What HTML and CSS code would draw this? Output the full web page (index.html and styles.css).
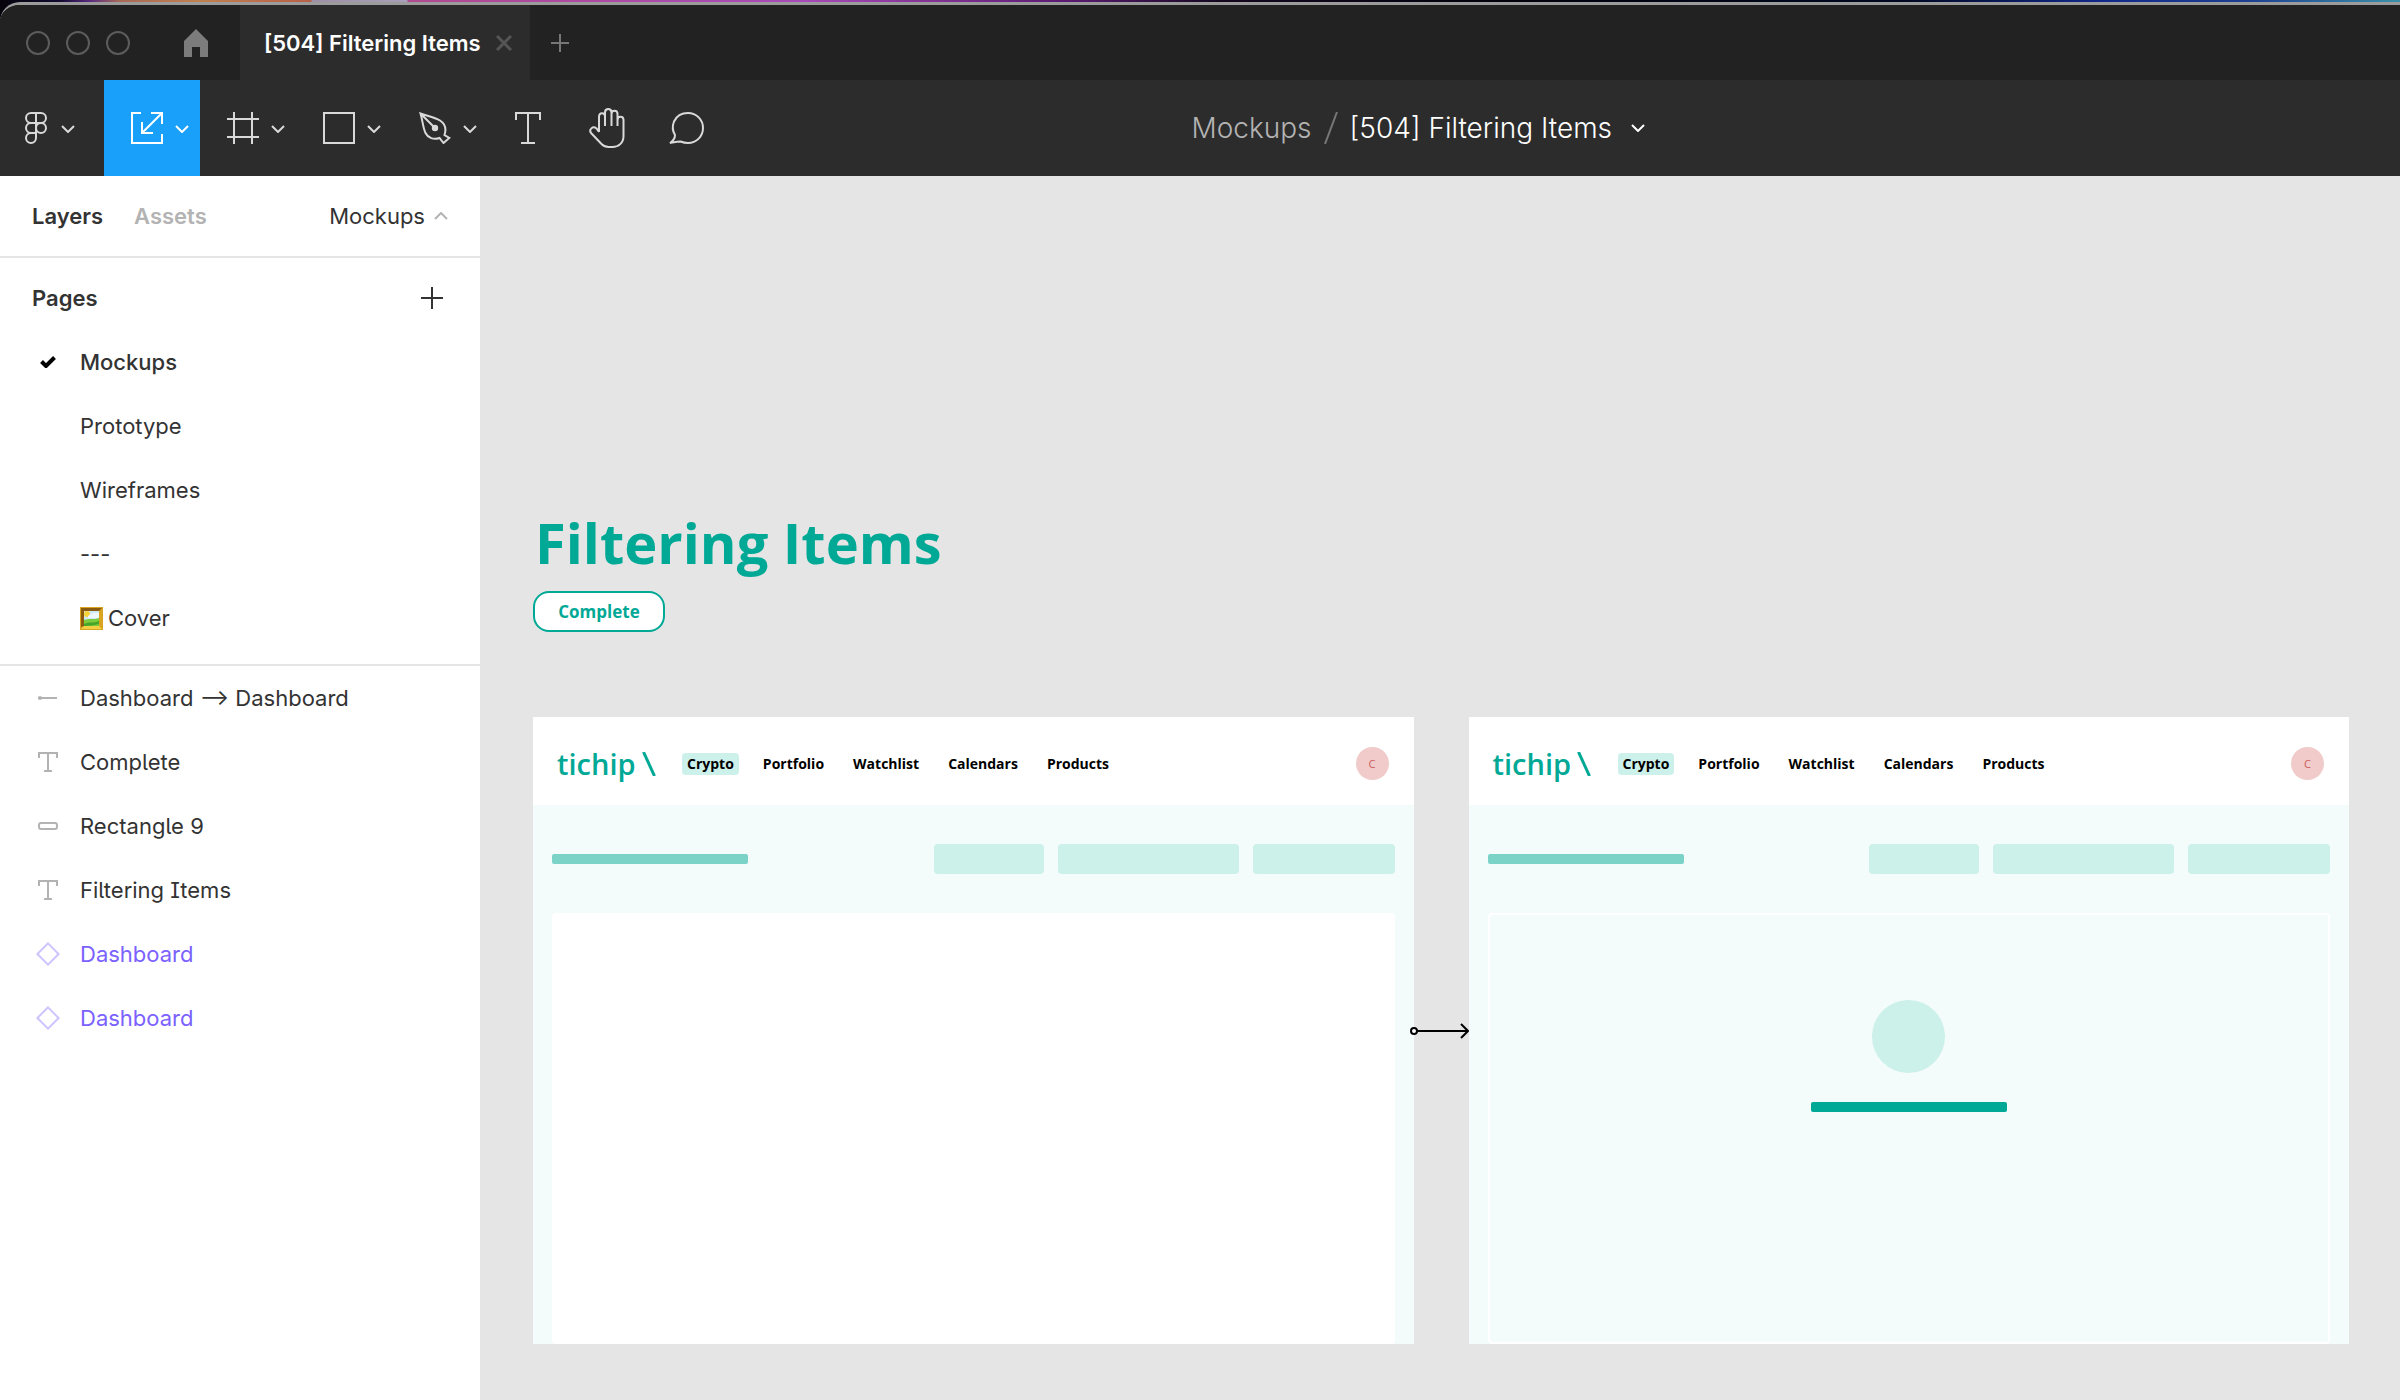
FILE: index.html
```html
<!DOCTYPE html>
<html lang="en">
<head>
<meta charset="utf-8">
<meta name="viewport" content="width=device-width, initial-scale=1">
<title>[504] Filtering Items</title>
<link rel="stylesheet" href="styles.css">
</head>
<body>
<svg class="sprite" aria-hidden="true">
  <symbol id="chevron" viewBox="0 0 14 8"><path d="M1 1l6 6 6-6" fill="none" stroke="currentColor" stroke-width="2"/></symbol>
  <symbol id="text-layer" viewBox="0 0 20 20"><path d="M1 6V1h18v5M10 1v18M6 19h8" fill="none" stroke="currentColor" stroke-width="2"/></symbol>
  <symbol id="diamond" viewBox="0 0 24 24"><path d="M12 1.400L22.600 12 12 22.600 1.400 12z" fill="none" stroke="currentColor" stroke-width="2"/></symbol>
</svg>

<div class="desktop">
<div class="window">
  <header class="tabbar">
    <div class="home-area">
      <div class="lights"><button class="light" aria-label="Close window"></button><button class="light" aria-label="Minimize window"></button><button class="light" aria-label="Zoom window"></button></div>
      <button class="home" aria-label="Home"><svg width="24" height="28" viewBox="0 0 24 28"><path d="M12 0l12 12v16h-8V18H8v10H0V12z" fill="currentColor"/></svg></button>
    </div>
    <div class="tab">
      <span class="tab-title">[504] Filtering Items</span>
      <button class="tab-close" aria-label="Close tab"><svg width="16" height="16" viewBox="0 0 16 16"><path d="M1 1l14 14M15 1L1 15" stroke="currentColor" stroke-width="3"/></svg></button>
    </div>
    <button class="tab-new" aria-label="New tab"><svg width="18" height="18" viewBox="0 0 18 18"><path d="M9 0v18M0 9h18" stroke="currentColor" stroke-width="2"/></svg></button>
  </header>

  <div class="toolbar">
    <div class="tools">
      <button class="tool tool-menu" aria-label="Main menu">
        <svg width="22" height="32" viewBox="0 0 22 32" fill="none" stroke="currentColor" stroke-width="2"><path d="M11 1H6a5 5 0 0 0 0 10h5zM11 1h5a5 5 0 0 1 0 10h-5M11 11H6a5 5 0 0 0 0 10h5zM11 21H6a5 5 0 1 0 5 5z"/><circle cx="16" cy="16" r="5"/></svg>
        <svg class="chev" width="14" height="8"><use href="#chevron"/></svg>
      </button>
      <button class="tool active" aria-label="Move and scale">
        <svg width="32" height="32" viewBox="0 0 32 32" fill="none" stroke="currentColor" stroke-width="2"><path d="M10 1H1v30h30v-9M20 1h11v11M31 1L11 21M11 10v11h11"/></svg>
        <svg class="chev" width="14" height="8"><use href="#chevron"/></svg>
      </button>
      <button class="tool" aria-label="Frame">
        <svg width="32" height="32" viewBox="0 0 32 32" fill="none" stroke="currentColor" stroke-width="2"><path d="M7 0v32M25 0v32M0 7h32M0 25h32"/></svg>
        <svg class="chev" width="14" height="8"><use href="#chevron"/></svg>
      </button>
      <button class="tool" aria-label="Shapes">
        <svg width="32" height="32" viewBox="0 0 32 32" fill="none" stroke="currentColor" stroke-width="2"><path d="M1 1h30v30H1z"/></svg>
        <svg class="chev" width="14" height="8"><use href="#chevron"/></svg>
      </button>
      <button class="tool" aria-label="Pen">
        <svg width="32" height="32" viewBox="0 0 32 32" fill="none" stroke="currentColor" stroke-width="2"><path d="M1.500 1.500c7 2.500 14 3.500 19.500 7 5.500 3.500 6.500 8.500 4.500 14.500l4.800 3-5.800 5-4-5c-6 2-11.500 0-14-5-2.500-5-3-13-5-19.500zM2 2l13 13"/><circle cx="16" cy="16" r="2.200" fill="currentColor"/></svg>
        <svg class="chev" width="14" height="8"><use href="#chevron"/></svg>
      </button>
      <button class="tool single" aria-label="Text"><svg width="26" height="32" viewBox="0 0 26 32" fill="none" stroke="currentColor" stroke-width="2"><path d="M1 8V1h24v7M13 1v30M6 31h14"/></svg></button>
      <button class="tool single" aria-label="Hand"><svg width="36" height="40" viewBox="0 0 36 40" fill="none" stroke="currentColor" stroke-width="2"><path d="M10 24V9c0-5 6-5 6 0v9V4.500c0-4.700 6.500-4.700 6.500 0V18M16 18V5M22.500 18V6c0-4.500 6-4.500 6 0v12V12c0-4.500 6-4.500 6 0v16c0 7-5 11-11 11h-4c-3 0-5-1-7-3L2.500 25.500c-3.500-4 1.500-8 5-5L10 24"/></svg></button>
      <button class="tool single" aria-label="Comment"><svg width="36" height="32" viewBox="0 0 36 32" fill="none" stroke="currentColor" stroke-width="2"><path d="M2 31c3-2 5-5 5-8C4.500 19 4.200 14 6 9.500 8.500 4 14 1 20 1c8.500 0 15 6.700 15 15s-6.500 15-15 15c-3 0-5-.5-7.500-1.500C9 29.500 5 30.500 2 31z"/></svg></button>
    </div>
    <div class="crumbs">
      <a class="crumb-parent" href="#mockups">Mockups</a>
      <svg class="slash" width="14" height="32" viewBox="0 0 14 32"><path d="M13 0L1 32" stroke="currentColor" stroke-width="2"/></svg>
      <button class="crumb-file">[504] Filtering Items <svg class="chev" width="14" height="8"><use href="#chevron"/></svg></button>
    </div>
  </div>

  <div class="workspace">
    <aside class="sidebar">
      <div class="side-tabs">
        <button class="side-tab on">Layers</button>
        <button class="side-tab">Assets</button>
        <button class="page-toggle">Mockups <svg class="chev-up" width="14" height="8"><use href="#chevron"/></svg></button>
      </div>
      <section class="pages">
        <div class="pages-head"><h2>Pages</h2><button class="add-page" aria-label="Add page"><svg width="22" height="22" viewBox="0 0 22 22"><path d="M11 0v22M0 11h22" stroke="currentColor" stroke-width="2"/></svg></button></div>
        <ul class="list">
          <li class="row current"><span class="icon"><svg width="16" height="12" viewBox="0 0 16 12"><path d="M1.500 5.500l4.500 4.500 8.500-8.500" fill="none" stroke="#000" stroke-width="4"/></svg></span>Mockups</li>
          <li class="row"><span class="icon"></span>Prototype</li>
          <li class="row"><span class="icon"></span>Wireframes</li>
          <li class="row"><span class="icon"></span>---</li>
          <li class="row"><span class="icon"></span><svg class="picture" width="23" height="23" viewBox="0 0 23 23"><path fill="#d9a520" d="M0 0h23v23H0z"/><path fill="#8a5c12" d="M1 1h21l-3 3H4v15l-3 1z"/><path fill="#f3cf45" d="M1 22l3-3h15l3 3z"/><path fill="#cfe8f6" d="M4 4h15v15H4z"/><circle cx="7" cy="7" r="3" fill="#f7d33a"/><path fill="#eef7fb" d="M8 9c3-3 7-4 11-3v5H8z"/><path fill="#7ccb3c" d="M4 13c5-2 10 0 15-2v8H4z"/><path fill="#45a32c" d="M4 17c5-3 10 0 15-3v3c-5 1-10 2-15 2z"/></svg>Cover</li>
        </ul>
      </section>
      <ul class="list layers">
        <li class="row"><span class="icon"><svg width="20" height="4" viewBox="0 0 20 4"><path d="M0 2h19" stroke="currentColor" stroke-width="2"/><circle cx="2" cy="2" r="2" fill="currentColor"/></svg></span>Dashboard ⟶ Dashboard</li>
        <li class="row"><span class="icon"><svg width="20" height="20"><use href="#text-layer"/></svg></span>Complete</li>
        <li class="row"><span class="icon"><svg width="20" height="8" viewBox="0 0 20 8"><rect x="1" y="1" width="18" height="6" rx="2" fill="none" stroke="currentColor" stroke-width="2"/></svg></span>Rectangle 9</li>
        <li class="row"><span class="icon"><svg width="20" height="20"><use href="#text-layer"/></svg></span>Filtering Items</li>
        <li class="row component"><span class="icon"><svg width="24" height="24"><use href="#diamond"/></svg></span>Dashboard</li>
        <li class="row component"><span class="icon"><svg width="24" height="24"><use href="#diamond"/></svg></span>Dashboard</li>
      </ul>
    </aside>

    <main class="canvas">
      <h1 class="heading">Filtering Items</h1>
      <div class="status">Complete</div>
      <div class="boards">
        <article class="board">
          <header class="board-head">
            <span class="logo">tichip<svg width="14" height="24" viewBox="0 0 14 24"><path d="M1.500 0L12.500 24" stroke="currentColor" stroke-width="3"/></svg></span>
            <nav class="nav"><a class="on" href="#crypto">Crypto</a><a href="#portfolio">Portfolio</a><a href="#watchlist">Watchlist</a><a href="#calendars">Calendars</a><a href="#products">Products</a></nav>
            <span class="avatar">C</span>
          </header>
          <div class="board-body">
            <div class="filters"><span class="line"></span><span class="chip chip-s"></span><span class="chip chip-l"></span><span class="chip chip-m"></span></div>
            <div class="panel filled"></div>
          </div>
          <svg class="connector" width="59" height="18" viewBox="0 0 59 18" fill="none" stroke="#000" stroke-width="2"><path d="M7 9h50M51 2l7 7-7 7"/><circle cx="4" cy="9" r="3" fill="#fff"/></svg>
        </article>
        <article class="board">
          <header class="board-head">
            <span class="logo">tichip<svg width="14" height="24" viewBox="0 0 14 24"><path d="M1.500 0L12.500 24" stroke="currentColor" stroke-width="3"/></svg></span>
            <nav class="nav"><a class="on" href="#crypto">Crypto</a><a href="#portfolio">Portfolio</a><a href="#watchlist">Watchlist</a><a href="#calendars">Calendars</a><a href="#products">Products</a></nav>
            <span class="avatar">C</span>
          </header>
          <div class="board-body">
            <div class="filters"><span class="line"></span><span class="chip chip-s"></span><span class="chip chip-l"></span><span class="chip chip-m"></span></div>
            <div class="panel"><span class="dot"></span><span class="line strong"></span></div>
          </div>
        </article>
      </div>
    </main>
  </div>
</div>
</div>
</body>
</html>
```
FILE: styles.css
```css
:root {
  --teal: #00a896;
  --mint: #ccf0ea;
  --ice: #f3fcfb;
  --ink: #333;
  --muted: #b3b3b3;
  --bar: #2c2c2c;
}
* { box-sizing: border-box; }
body { margin: 0; font: 400 22px/32px Inter, "Liberation Sans", sans-serif; color: var(--ink); }
button { font: inherit; color: inherit; background: none; border: 0; padding: 0; display: flex; align-items: center; }
a { color: inherit; text-decoration: none; }
svg { display: block; flex: none; }
ul { list-style: none; margin: 0; padding: 0; }
.sprite { position: absolute; width: 0; height: 0; }

.desktop {
  min-height: 100vh;
  padding-top: 2px;
  display: flex;
  background: linear-gradient(90deg, #06040c 0, #120a30 60px, #5a2a80 90px, #a86a58 120px, #c08050 200px, #b86048 311px, #9c90a8 312px, #a8a0b8 407px, #b04a90 408px, #a84ab8 800px, #5a1a70 1070px, #140820 1220px, #02020c 1500px, #020820 1900px, #10288a 2100px, #1e4090 2250px, #3a90a8 100%) top / 100% 24px no-repeat, var(--bar);
}
.window { flex: 1; min-width: 0; display: flex; flex-direction: column; background: #222; border-top: 3px solid #9c9c9c; border-radius: 20px 0 0 0; overflow: hidden; }

.tabbar { display: flex; height: 75px; background: #222; }
.home-area { width: 240px; display: flex; align-items: center; justify-content: space-between; padding: 0 32px 0 26px; }
.lights { display: flex; gap: 16px; }
.light { width: 24px; height: 24px; border: 2px solid #5c5c5c; border-radius: 50%; }
.home { color: #7c7c7c; }
.tab { display: flex; align-items: center; justify-content: space-between; width: 290px; padding: 0 18px 0 24px; background: var(--bar); color: #fff; font-weight: 600; white-space: nowrap; }
.tab-close { color: #555; }
.tab-new { width: 60px; justify-content: center; color: #777; }

.toolbar { display: flex; align-items: center; height: 96px; padding-right: 17px; background: var(--bar); color: #d9d9d9; }
.tools { display: flex; flex: 1; }
.tool { height: 96px; width: 96px; gap: 12px; justify-content: flex-end; padding-right: 11px; }
.tool-menu { width: 104px; gap: 14px; justify-content: flex-start; padding: 0 0 0 25px; }
.tool.active { background: #18a0fb; color: #fff; }
.tool.single { width: 79px; justify-content: center; padding: 0; }
.tool .chev { margin-top: 2px; }
.crumbs { display: flex; flex: 1; align-items: center; gap: 12px; font-size: 28px; font-weight: 300; color: #fff; white-space: nowrap; }
.crumb-parent { color: #b3b3b3; }
.slash { color: #777; }
.crumb-file { gap: 19px; }

.workspace { flex: 1; display: flex; }
.sidebar { width: 480px; flex: none; background: #fff; }
.side-tabs { display: flex; align-items: center; gap: 31px; height: 82px; padding: 0 32px; border-bottom: 2px solid #e5e5e5; }
.side-tab { color: var(--muted); font-weight: 600; }
.side-tab.on { color: var(--ink); }
.page-toggle { margin-left: auto; gap: 9px; }
.chev-up { transform: rotate(180deg); color: var(--muted); }
.pages { padding: 8px 0 14px; border-bottom: 2px solid #e5e5e5; }
.pages-head { display: flex; align-items: center; justify-content: space-between; height: 64px; padding: 0 37px 0 32px; }
.pages-head h2 { margin: 0; font: inherit; font-weight: 600; }
.row { display: flex; align-items: center; height: 64px; padding-left: 32px; }
.icon { width: 32px; margin-right: 16px; display: flex; justify-content: center; color: var(--muted); }
.row.current { font-weight: 500; }
.picture { margin-right: 5px; }
.layers { font-feature-settings: "ss02"; }
.component { color: #7b61ff; }
.component .icon { color: #cdc3ff; }

.canvas { flex: 1; min-width: 0; padding: 324px 51px 56px 53px; background: #e5e5e5; font-family: "Open Sans", "Noto Sans", sans-serif; }
.heading { margin: 0; padding-left: 2px; font-size: 56px; line-height: 84px; font-weight: 700; color: var(--teal); }
.status { width: 132px; height: 41px; margin-top: 7px; display: flex; align-items: center; justify-content: center; border: 2px solid var(--teal); border-radius: 16px; background: #fff; color: var(--teal); font-size: 17px; font-weight: 700; }
.boards { display: grid; grid-template-columns: 1fr 1fr; gap: 55px; margin-top: 85px; }
.board { position: relative; display: flex; flex-direction: column; background: var(--ice); }
.board-head { display: flex; align-items: center; height: 88px; padding: 5px 25px 0 24px; background: #fff; }
.logo { width: 125px; display: flex; align-items: center; gap: 6px; color: var(--teal); font-size: 29px; font-weight: 600; }
.nav { display: flex; flex: 1; gap: 19px; font-size: 14px; line-height: 22px; font-weight: 700; color: #000; }
.nav a { padding: 0 5px; border-radius: 4px; }
.nav a.on { background: var(--mint); }
.avatar { width: 33px; height: 33px; border-radius: 50%; background: #f1caca; color: #c9605f; font-size: 11px; line-height: 33px; text-align: center; }
.board-body { padding: 39px 19px 0; }
.filters { display: flex; align-items: center; gap: 14px; margin-bottom: 39px; }
.line { width: 196px; height: 10px; margin-right: auto; border-radius: 2px; background: #7bd2c7; }
.chip { height: 30px; border-radius: 4px; background: var(--mint); }
.chip-s { width: 110px; }
.chip-l { width: 181px; }
.chip-m { width: 142px; }
.panel { height: 431px; display: flex; flex-direction: column; align-items: center; gap: 29px; padding-top: 85px; border: 2px solid #fff; border-radius: 4px; }
.panel.filled { background: #fff; }
.dot { width: 73px; height: 73px; border-radius: 50%; background: var(--mint); }
.line.strong { margin: 0; background: var(--teal); }
.connector { position: absolute; left: calc(100% - 4px); top: 50%; transform: translateY(-50%); z-index: 1; }
```
